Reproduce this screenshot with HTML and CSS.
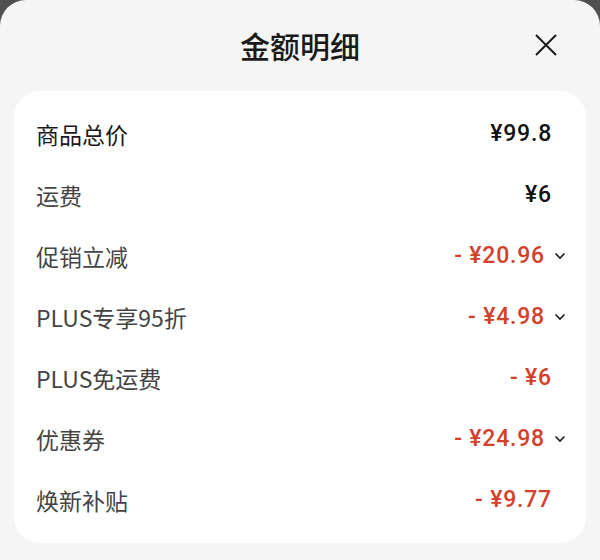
FILE: index.html
```html
<!DOCTYPE html>
<html lang="zh">
<head>
    <meta charset="UTF-8">
    <meta name="viewport" content="width=device-width, initial-scale=1.0">
    <title>金额明细</title>
    <link rel="stylesheet" href="styles.css">
</head>
<body>
    <div class="sheet">
        <div class="sheet-header">
            <h2 class="sheet-title">金额明细</h2>
            <button class="close-btn" aria-label="关闭">
                <svg width="22" height="22" viewBox="0 0 22 22">
                    <path d="M1 1 L21 21 M21 1 L1 21" stroke="#1a1a1a" stroke-width="2" fill="none"/>
                </svg>
            </button>
        </div>

        <div class="detail-card">
            <div class="detail-row">
                <span class="row-label strong">商品总价</span>
                <span class="row-value">¥99.8</span>
            </div>
            <div class="detail-row">
                <span class="row-label">运费</span>
                <span class="row-value">¥6</span>
            </div>
            <div class="detail-row">
                <span class="row-label">促销立减</span>
                <span class="row-value minus">- ¥20.96</span>
                <span class="chevron"><svg width="12" height="8" viewBox="0 0 12 8"><path d="M1.5 1.5 L6 6 L10.5 1.5" stroke="#1a1a1a" stroke-width="1.6" fill="none"/></svg></span>
            </div>
            <div class="detail-row">
                <span class="row-label">PLUS专享95折</span>
                <span class="row-value minus">- ¥4.98</span>
                <span class="chevron"><svg width="12" height="8" viewBox="0 0 12 8"><path d="M1.5 1.5 L6 6 L10.5 1.5" stroke="#1a1a1a" stroke-width="1.6" fill="none"/></svg></span>
            </div>
            <div class="detail-row">
                <span class="row-label">PLUS免运费</span>
                <span class="row-value minus">- ¥6</span>
            </div>
            <div class="detail-row">
                <span class="row-label">优惠券</span>
                <span class="row-value minus">- ¥24.98</span>
                <span class="chevron"><svg width="12" height="8" viewBox="0 0 12 8"><path d="M1.5 1.5 L6 6 L10.5 1.5" stroke="#1a1a1a" stroke-width="1.6" fill="none"/></svg></span>
            </div>
            <div class="detail-row">
                <span class="row-label">焕新补贴</span>
                <span class="row-value minus">- ¥9.77</span>
            </div>
        </div>
    </div>
</body>
</html>
```

FILE: styles.css
```css
body {
    margin: 0;
    padding: 0;
    height: 560px;
    overflow: hidden;
    background: #505050;
    font-family: "Noto Sans CJK SC", "Noto Sans", sans-serif;
}

.sheet {
    height: 100%;
    background: #f5f5f5;
    border-radius: 26px 26px 0 0;
    padding: 0 14px;
    box-sizing: border-box;
}

.sheet-header {
    height: 91px;
    display: flex;
    align-items: center;
    justify-content: center;
    position: relative;
}
.sheet-title {
    margin: 0;
    font-size: 30px;
    font-weight: 500;
    color: #1a1a1a;
    line-height: 1;
    padding-bottom: 1px;
}
.close-btn {
    position: absolute;
    right: 29px;
    top: 34px;
    padding: 0;
    border: none;
    background: none;
    display: flex;
}

.detail-card {
    background: #fff;
    border-radius: 26px;
    padding: 12px 0 13px;
}
.detail-row {
    height: 61px;
    display: flex;
    align-items: center;
    padding: 0 34px 0 22px;
}
.row-label {
    flex: 1;
    font-size: 23px;
    color: #444;
}
.row-label.strong {
    color: #1a1a1a;
}
.row-value {
    font-family: Roboto, "Noto Sans", sans-serif;
    font-size: 23px;
    font-weight: 500;
    letter-spacing: 0.8px;
    color: #111;
}
.row-value.minus {
    color: #d3402b;
}
.chevron {
    display: flex;
    margin-left: 9px;
    margin-right: -14px;
}
```
